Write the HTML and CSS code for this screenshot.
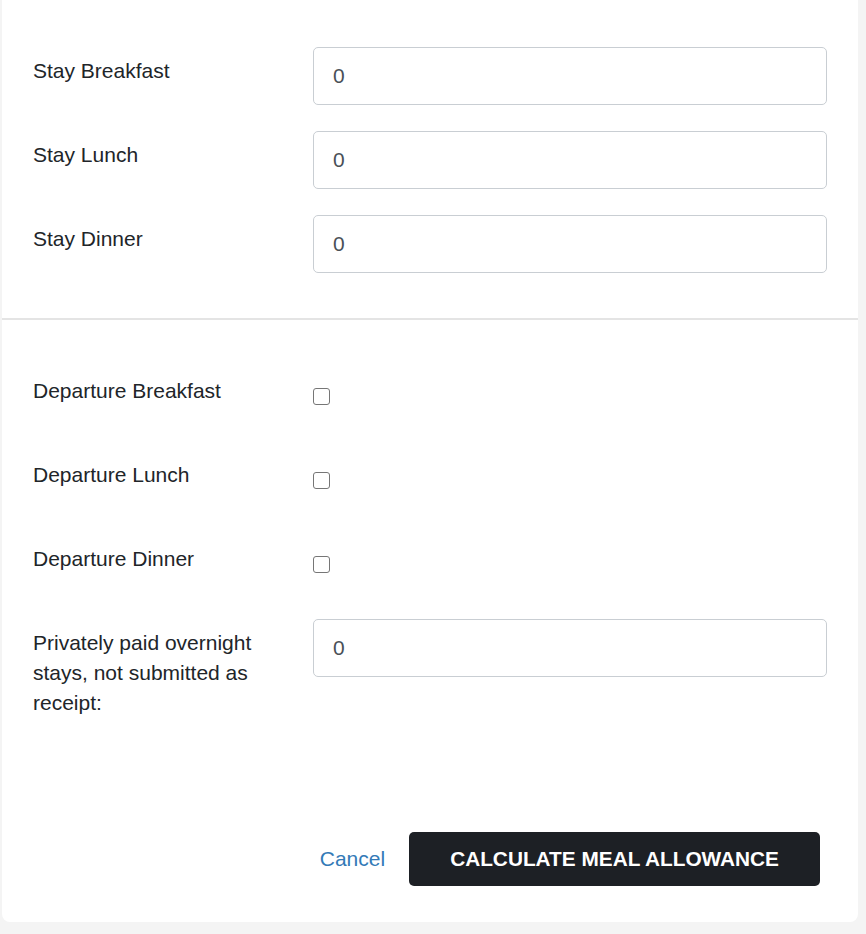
FILE: index.html
```html
<!DOCTYPE html>
<html lang="en">
<head>
    <meta charset="UTF-8">
    <meta name="viewport" content="width=device-width, initial-scale=1.0">
    <title>Meal Allowance</title>
    <link rel="stylesheet" href="styles.css">
</head>
<body>
    <div class="card">
        <div class="section">
            <div class="form-row">
                <label class="form-label" for="stay-breakfast">Stay Breakfast</label>
                <input class="form-input" id="stay-breakfast" type="text" value="0">
            </div>
            <div class="form-row">
                <label class="form-label" for="stay-lunch">Stay Lunch</label>
                <input class="form-input" id="stay-lunch" type="text" value="0">
            </div>
            <div class="form-row">
                <label class="form-label" for="stay-dinner">Stay Dinner</label>
                <input class="form-input" id="stay-dinner" type="text" value="0">
            </div>
        </div>

        <div class="section section-bottom">
            <div class="form-row">
                <label class="form-label" for="dep-breakfast">Departure Breakfast</label>
                <div class="check-wrap"><input class="form-check" id="dep-breakfast" type="checkbox"></div>
            </div>
            <div class="form-row">
                <label class="form-label" for="dep-lunch">Departure Lunch</label>
                <div class="check-wrap"><input class="form-check" id="dep-lunch" type="checkbox"></div>
            </div>
            <div class="form-row">
                <label class="form-label" for="dep-dinner">Departure Dinner</label>
                <div class="check-wrap"><input class="form-check" id="dep-dinner" type="checkbox"></div>
            </div>
            <div class="form-row">
                <label class="form-label" for="overnight">Privately paid overnight stays, not submitted as receipt:</label>
                <input class="form-input" id="overnight" type="text" value="0">
            </div>
        </div>

        <div class="footer">
            <a href="#" class="cancel">Cancel</a>
            <button class="btn-submit">CALCULATE MEAL ALLOWANCE</button>
        </div>
    </div>
</body>
</html>
```

FILE: styles.css
```css
body {
    margin: 0;
    padding: 0 8px 12px 2px;
    font-family: "Liberation Sans", Arial, sans-serif;
    background: #f4f4f4;
    color: #212529;
}

.card {
    background: #fff;
    border-radius: 0 0 8px 8px;
}

.section {
    padding: 47px 31px 45px 31px;
}

.section-bottom {
    border-top: 2px solid #e4e4e4;
    padding-bottom: 0;
}

.form-row {
    display: grid;
    grid-template-columns: 280px 1fr;
    align-items: start;
    margin-bottom: 26px;
    min-height: 58px;
}

.form-row:last-child {
    margin-bottom: 0;
}

.form-label {
    padding: 9px 20px 0 0;
    font-size: 21px;
    line-height: 30px;
}

.form-input {
    box-sizing: border-box;
    width: 100%;
    height: 58px;
    padding: 0 19px;
    font-family: inherit;
    font-size: 21px;
    color: #495057;
    border: 1.5px solid #c9ced3;
    border-radius: 5px;
    background: #fff;
    outline: none;
}

.check-wrap {
    height: 58px;
    display: flex;
    align-items: center;
}

.form-check {
    appearance: none;
    -webkit-appearance: none;
    width: 17px;
    height: 17px;
    margin: 1px 0 0 0;
    border: 1.5px solid #767676;
    border-radius: 3px;
    background: #fff;
}

.footer {
    display: flex;
    justify-content: flex-end;
    align-items: center;
    gap: 24px;
    padding: 114px 38px 36px 0;
}

.cancel {
    font-size: 21px;
    color: #337ab7;
    text-decoration: none;
}

.btn-submit {
    height: 54px;
    padding: 0 41px;
    font-family: inherit;
    font-size: 20.8px;
    font-weight: bold;
    color: #fff;
    background-color: #1d2025;
    border: none;
    border-radius: 5px;
    cursor: pointer;
}
```
